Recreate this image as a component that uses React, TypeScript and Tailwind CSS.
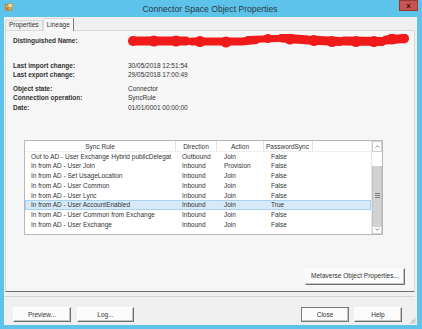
const rows = [
  ['Out to AD - User Exchange Hybrid publicDelegat', 'Outbound', 'Join', 'False'],
  ['In from AD - User Join', 'Inbound', 'Provision', 'False'],
  ['In from AD - Set UsageLocation', 'Inbound', 'Join', 'False'],
  ['In from AD - User Common', 'Inbound', 'Join', 'False'],
  ['In from AD - User Lync', 'Inbound', 'Join', 'False'],
  ['In from AD - User AccountEnabled', 'Inbound', 'Join', 'True'],
  ['In from AD - User Common from Exchange', 'Inbound', 'Join', 'False'],
  ['In from AD - User Exchange', 'Inbound', 'Join', 'False'],
]

const fields = [
  ['Last import change:', '30/05/2018 12:51:54'],
  ['Last export change:', '29/05/2018 17:00:49'],
]

const state = [
  ['Object state:', 'Connector'],
  ['Connection operation:', 'SyncRule'],
  ['Date:', '01/01/0001 00:00:00'],
]

function Btn({ label, w, primary }: { label: string; w: string; primary?: boolean }) {
  return (
    <div
      className={`${w} h-[15px] flex items-center justify-center bg-[#fbfbfb] border ${
        primary ? 'border-[#7a7a7a]' : 'border-t-white border-l-white border-r-[#6f6f6f] border-b-[#6f6f6f]'
      } shadow-[inset_-1px_-1px_0_#c4c4c4]`}
    >
      {label}
    </div>
  )
}

function Redaction() {
  return (
    <svg width="282" height="14" viewBox="0 0 282 14">
      <g stroke="#f01a1a" strokeLinecap="round" fill="none">
        <path d="M5 7 L58 7" strokeWidth="9" />
        <path d="M64 7.5 L114 7.5 L128 6" strokeWidth="8" />
        <path d="M120 5.5 L150 4.5" strokeWidth="7" />
        <path d="M154 4 L180 6 L212 7.5" strokeWidth="9" />
        <path d="M216 7 L254 7.5" strokeWidth="9" />
        <path d="M258 6 L276 4.5" strokeWidth="9" />
      </g>
      <g fill="#f01a1a">
        <circle cx="5" cy="7" r="5" />
        <circle cx="26" cy="7" r="5.5" />
        <circle cx="48" cy="7" r="5.5" />
        <circle cx="72" cy="7.5" r="5.5" />
        <circle cx="98" cy="8" r="5.5" />
        <circle cx="140" cy="4.5" r="4.5" />
        <circle cx="162" cy="5" r="5.5" />
        <circle cx="186" cy="6.5" r="5.5" />
        <circle cx="204" cy="7.5" r="5.5" />
        <circle cx="228" cy="7.5" r="5.5" />
        <circle cx="246" cy="7.5" r="5.5" />
        <circle cx="264" cy="5" r="5.5" />
        <circle cx="276" cy="4.5" r="5" />
      </g>
    </svg>
  )
}

export default function App() {
  return (
    <div className="w-[422px] h-[329px] bg-[#5ec3ea] flex flex-col font-['Liberation_Sans',Arial,sans-serif] text-[6.5px] text-[#333] overflow-hidden">
      {/* title bar */}
      <div className="h-[17px] flex items-start relative">
        <svg className="mt-[3px] ml-[5px]" width="8" height="8" viewBox="0 0 8 8">
          <rect x="0.5" y="1.5" width="6" height="6" fill="#e6b04a" stroke="#a0702a" strokeWidth="0.6" />
          <rect x="3" y="0.5" width="4.5" height="4" fill="#f4d9a0" stroke="#b8893d" strokeWidth="0.6" />
          <rect x="1.5" y="4.5" width="2" height="2" fill="#d0542a" />
        </svg>
        <div className="flex-1 text-center text-[8.6px] text-[#2a3a44] pt-[3px] pl-[8px]">Connector Space Object Properties</div>
        <div className="w-[19px] h-[11px] mr-[4px] bg-[#c75353] border border-[#9a3838] flex items-center justify-center text-[8px] font-bold text-[#3a1010] leading-none">
          x
        </div>
      </div>

      {/* client area */}
      <div className="ml-[4px] mr-[5px] mb-[4px] flex-1 bg-[#f0f0f0] flex flex-col relative">
        {/* tabs */}
        <div className="h-[13px] flex items-end pl-[1px] relative z-10">
          <div className="h-[10px] px-[3px] flex items-center border border-b-0 border-[#d9d9d9] bg-[#f0f0f0] leading-none">Properties</div>
          <div className="h-[13px] mb-[-1px] px-[3px] flex items-center border border-b-0 border-[#d9d9d9] border-r-[#7a7a7a] bg-[#f8f8f8] leading-none">Lineage</div>
        </div>

        {/* panel */}
        <div className="h-[262px] ml-[1px] mr-[2px] border border-[#d9d9d9] border-b-[#6e6e6e] bg-[#f6f6f6] flex flex-col pl-[7px]">
          <div className="mt-[5px] h-[10px] flex items-center">
            <span className="w-[115px] font-bold">Distinguished Name:</span>
            <Redaction />
          </div>

          <div className="mt-[15px] flex flex-col">
            {fields.map(([k, v]) => (
              <div key={k} className="h-[9.5px] flex items-center">
                <span className="w-[115px] font-bold">{k}</span>
                <span>{v}</span>
              </div>
            ))}
          </div>
          <div className="mt-[4px] flex flex-col">
            {state.map(([k, v]) => (
              <div key={k} className="h-[9.5px] flex items-center">
                <span className="w-[115px] font-bold">{k}</span>
                <span>{v}</span>
              </div>
            ))}
          </div>

          {/* list view */}
          <div className="mt-[27px] ml-[11px] w-[359px] h-[95px] border border-[#b8b8b8] bg-white flex">
            <div className="flex-1 flex flex-col">
              <div className="h-[11px] flex border-b border-[#f0f0f0]">
                <div className="w-[151px] text-center border-r border-[#e3e3e3] leading-[11px]">Sync Rule</div>
                <div className="w-[41px] text-center border-r border-[#e3e3e3] leading-[11px]">Direction</div>
                <div className="w-[47px] text-center border-r border-[#e3e3e3] leading-[11px]">Action</div>
                <div className="w-[49px] pl-[2px] border-r border-[#e3e3e3] leading-[11px]">PasswordSync</div>
                <div className="flex-1" />
              </div>
              {rows.map((r, i) => (
                <div
                  key={i}
                  className={`h-[9.75px] flex items-center border ${i === 5 ? 'bg-[#d6eaf9] border-[#a8d2f2]' : 'border-transparent'}`}
                >
                  <div className="w-[151px] pl-[5px] whitespace-nowrap overflow-hidden">{r[0]}</div>
                  <div className="w-[41px] pl-[5px]">{r[1]}</div>
                  <div className="w-[47px] pl-[6px]">{r[2]}</div>
                  <div className="w-[49px] pl-[6px]">{r[3]}</div>
                </div>
              ))}
            </div>
            {/* scrollbar */}
            <div className="w-[11px] flex flex-col border-l border-[#e6e6e6]">
              <div className="h-[11px] border border-[#d0d0d0] bg-white flex items-center justify-center">
                <svg width="5" height="3" viewBox="0 0 5 3"><path d="M0.5 2.7 L2.5 0.6 L4.5 2.7" stroke="#777" strokeWidth="0.8" fill="none" /></svg>
              </div>
              <div className="h-[14px] bg-white" />
              <div className="h-[60px] bg-[#d2d2d2] border-x border-[#c2c2c2] flex items-center justify-center">
                <div className="w-[5px] flex flex-col gap-[1px]">
                  <div className="h-px bg-[#7f7f7f]" />
                  <div className="h-px bg-[#7f7f7f]" />
                  <div className="h-px bg-[#7f7f7f]" />
                </div>
              </div>
              <div className="flex-1 border border-[#d0d0d0] bg-white flex items-center justify-center">
                <svg width="5" height="3" viewBox="0 0 5 3"><path d="M0.5 0.3 L2.5 2.4 L4.5 0.3" stroke="#777" strokeWidth="0.8" fill="none" /></svg>
              </div>
            </div>
          </div>

          <div className="mt-[33px] flex justify-end pr-[9px]">
            <div className="w-[100px] h-[17px] flex items-center justify-center bg-[#fbfbfb] border border-t-white border-l-white border-r-[#6f6f6f] border-b-[#6f6f6f] shadow-[inset_-1px_-1px_0_#c4c4c4]">
              Metaverse Object Properties...
            </div>
          </div>
        </div>

        <div className="mt-[4px] h-px bg-[#d6d6d6] mr-[2px]" />

        {/* bottom buttons */}
        <div className="mt-[10px] flex pl-[9px] pr-[15px]">
          <Btn label="Preview..." w="w-[58px]" />
          <div className="w-[6px]" />
          <Btn label="Log..." w="w-[57px]" />
          <div className="flex-1" />
          <Btn label="Close" w="w-[48px]" primary />
          <div className="w-[5px]" />
          <Btn label="Help" w="w-[48px]" />
        </div>

        <svg className="absolute right-[1px] bottom-[1px]" width="7" height="7" viewBox="0 0 7 7">
          <path d="M6.5 1 L1 6.5 M6.5 3 L3 6.5 M6.5 5 L5 6.5" stroke="#9a9a9a" strokeWidth="0.7" />
        </svg>
      </div>
    </div>
  )
}
